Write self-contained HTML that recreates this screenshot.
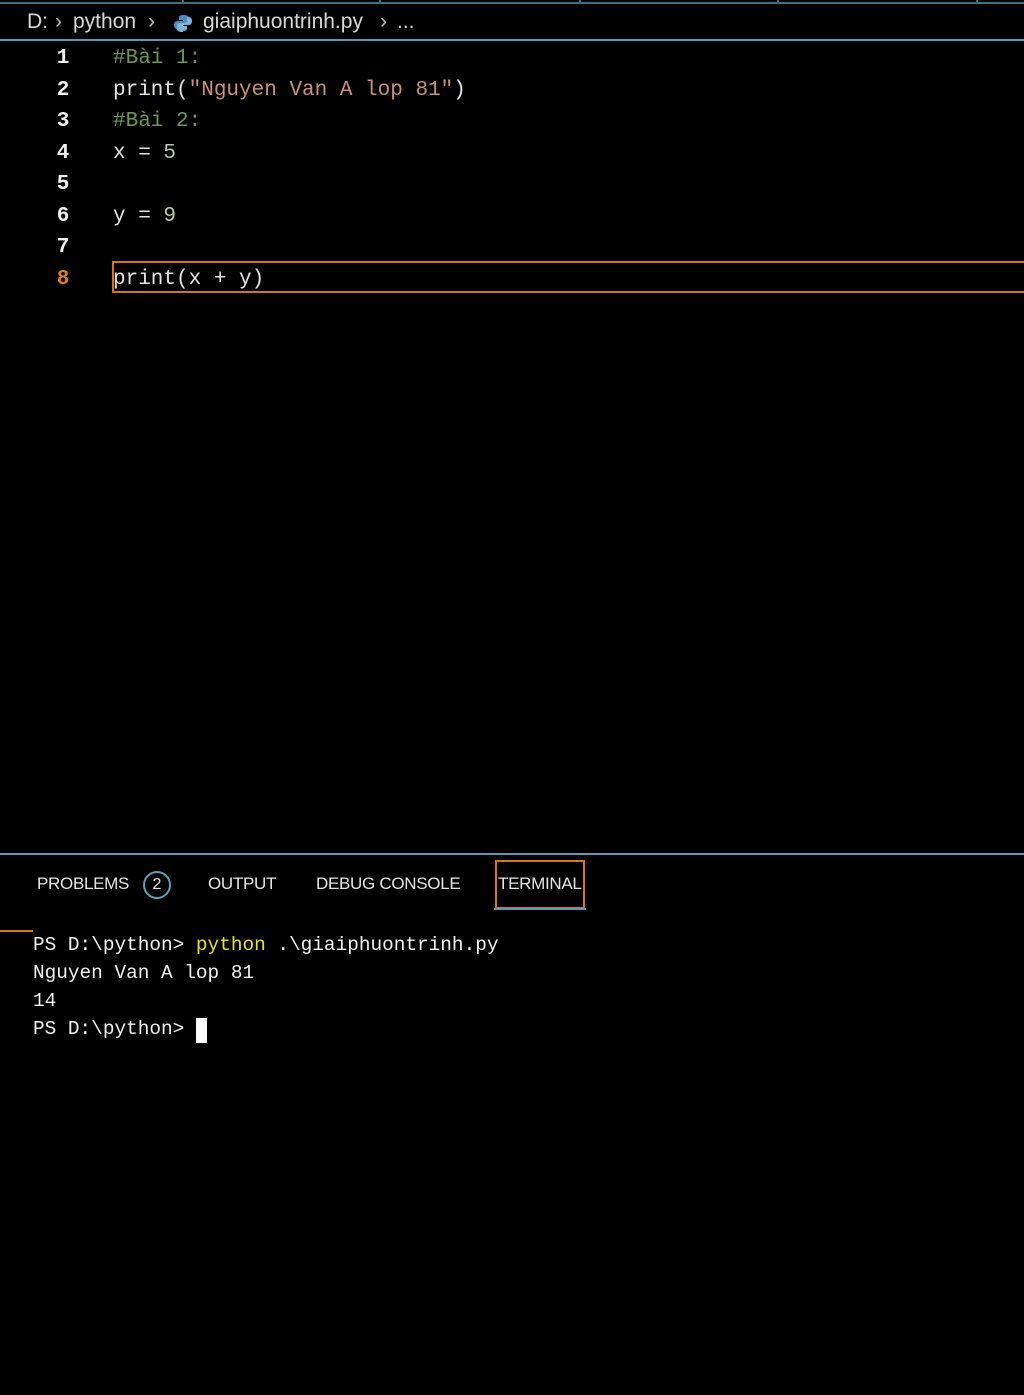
<!DOCTYPE html>
<html><head><meta charset="utf-8"><style>
body{margin:0;width:1024px;height:1395px;background:#000;position:relative;overflow:hidden;font-family:"Liberation Sans",sans-serif;}
.abs{position:absolute}
.mono{font-family:"Liberation Mono","DejaVu Sans Mono",monospace;white-space:pre}
.code{font-size:21px;color:#e4e4e4;line-height:31.5px}
.ln{position:absolute;left:48px;width:30px;text-align:center;font-family:"Liberation Mono",monospace;font-size:21px;color:#f0f0f0;font-weight:bold}
.cm{color:#6a9955}.st{color:#ce9178}.nu{color:#b5cea8}
.term{font-size:19.4px;color:#f0f0f0;line-height:28px}
.tab{position:absolute;top:874px;font-size:17px;color:#e6e6e6;letter-spacing:-0.3px}
.bc{position:absolute;top:10px;font-size:21px;color:#d8d8d8;letter-spacing:0;white-space:pre}
</style></head><body>
<div class="abs" style="left:0;top:2px;width:1024px;height:2px;background:#3c6e80"></div>
<div class="abs" style="left:182px;top:0;width:2px;height:4px;background:#3c6e80"></div>
<div class="abs" style="left:379px;top:0;width:2px;height:4px;background:#3c6e80"></div>
<div class="abs" style="left:579px;top:0;width:2px;height:4px;background:#3c6e80"></div>
<div class="abs" style="left:777px;top:0;width:2px;height:4px;background:#3c6e80"></div>
<div class="abs" style="left:976px;top:0;width:2px;height:4px;background:#3c6e80"></div>
<div class="bc" style="left:27px">D:</div>
<div class="bc" style="left:55px;color:#bbb">›</div>
<div class="bc" style="left:73px">python</div>
<div class="bc" style="left:148px;color:#bbb">›</div>
<svg class="abs" style="left:173px;top:13px" width="20" height="20" viewBox="0 0 20 20"><path d="M10 2c-4 0-4 2-4 3v2h4v1H4c-2 0-3 2-3 4s1 4 3 4h2v-3c0-2 1-3 3-3h4c2 0 3-1 3-3V5c0-2-2-3-6-3z" fill="#4b8bbe"/><path d="M10 18c4 0 4-2 4-3v-2h-4v-1h6c2 0 3-2 3-4s-1-4-3-4h-2v3c0 2-1 3-3 3H7c-2 0-3 1-3 3v3c0 2 2 3 6 3z" fill="#7fb3d8"/></svg>
<div class="bc" style="left:203px">giaiphuontrinh.py</div>
<div class="bc" style="left:380px;color:#bbb">›</div>
<div class="bc" style="left:397px">...</div>
<div class="abs" style="left:0;top:39px;width:1024px;height:2px;background:#5a9ab8"></div>

<div class="ln" style="top:43px;line-height:31.5px">1<br>2<br>3<br>4<br>5<br>6<br>7<br><span style="color:#e07b20">8</span></div>
<div class="abs mono code" style="left:113px;top:43px"><span class="cm">#Bài 1:</span>
print(<span class="st">"Nguyen Van A lop 81"</span>)
<span class="cm">#Bài 2:</span>
x = <span class="nu">5</span>

y = <span class="nu">9</span>

print(x + y)</div>
<div class="abs" style="left:112px;top:261px;width:920px;height:32px;border:2px solid #d8731c;border-right:none;box-sizing:border-box"></div>

<div class="abs" style="left:0;top:853px;width:1024px;height:2px;background:#5a9ab8"></div>
<div class="tab" style="left:37px">PROBLEMS</div>
<div class="abs" style="left:143px;top:871px;width:28px;height:28px;border:2px solid #5aa0b8;border-radius:50%;box-sizing:border-box;color:#e6e6e6;font-size:16px;text-align:center;line-height:24px">2</div>
<div class="tab" style="left:208px">OUTPUT</div>
<div class="tab" style="left:316px">DEBUG CONSOLE</div>
<div class="abs" style="left:495px;top:860px;width:90px;height:49px;border:2px solid #d8731c;box-sizing:border-box"></div>
<div class="tab" style="left:498px">TERMINAL</div>
<div class="abs" style="left:494px;top:908px;width:92px;height:2px;background:#5a9ab8"></div>
<div class="abs" style="left:0;top:930px;width:33px;height:2px;background:#d8731c"></div>
<div class="abs mono term" style="left:33px;top:931px">PS D:\python> <span style="color:#e8e020">python</span> .\giaiphuontrinh.py
Nguyen Van A lop 81
14
PS D:\python> </div>
<div class="abs" style="left:196px;top:1018px;width:11px;height:25px;background:#fff"></div>
</body></html>
